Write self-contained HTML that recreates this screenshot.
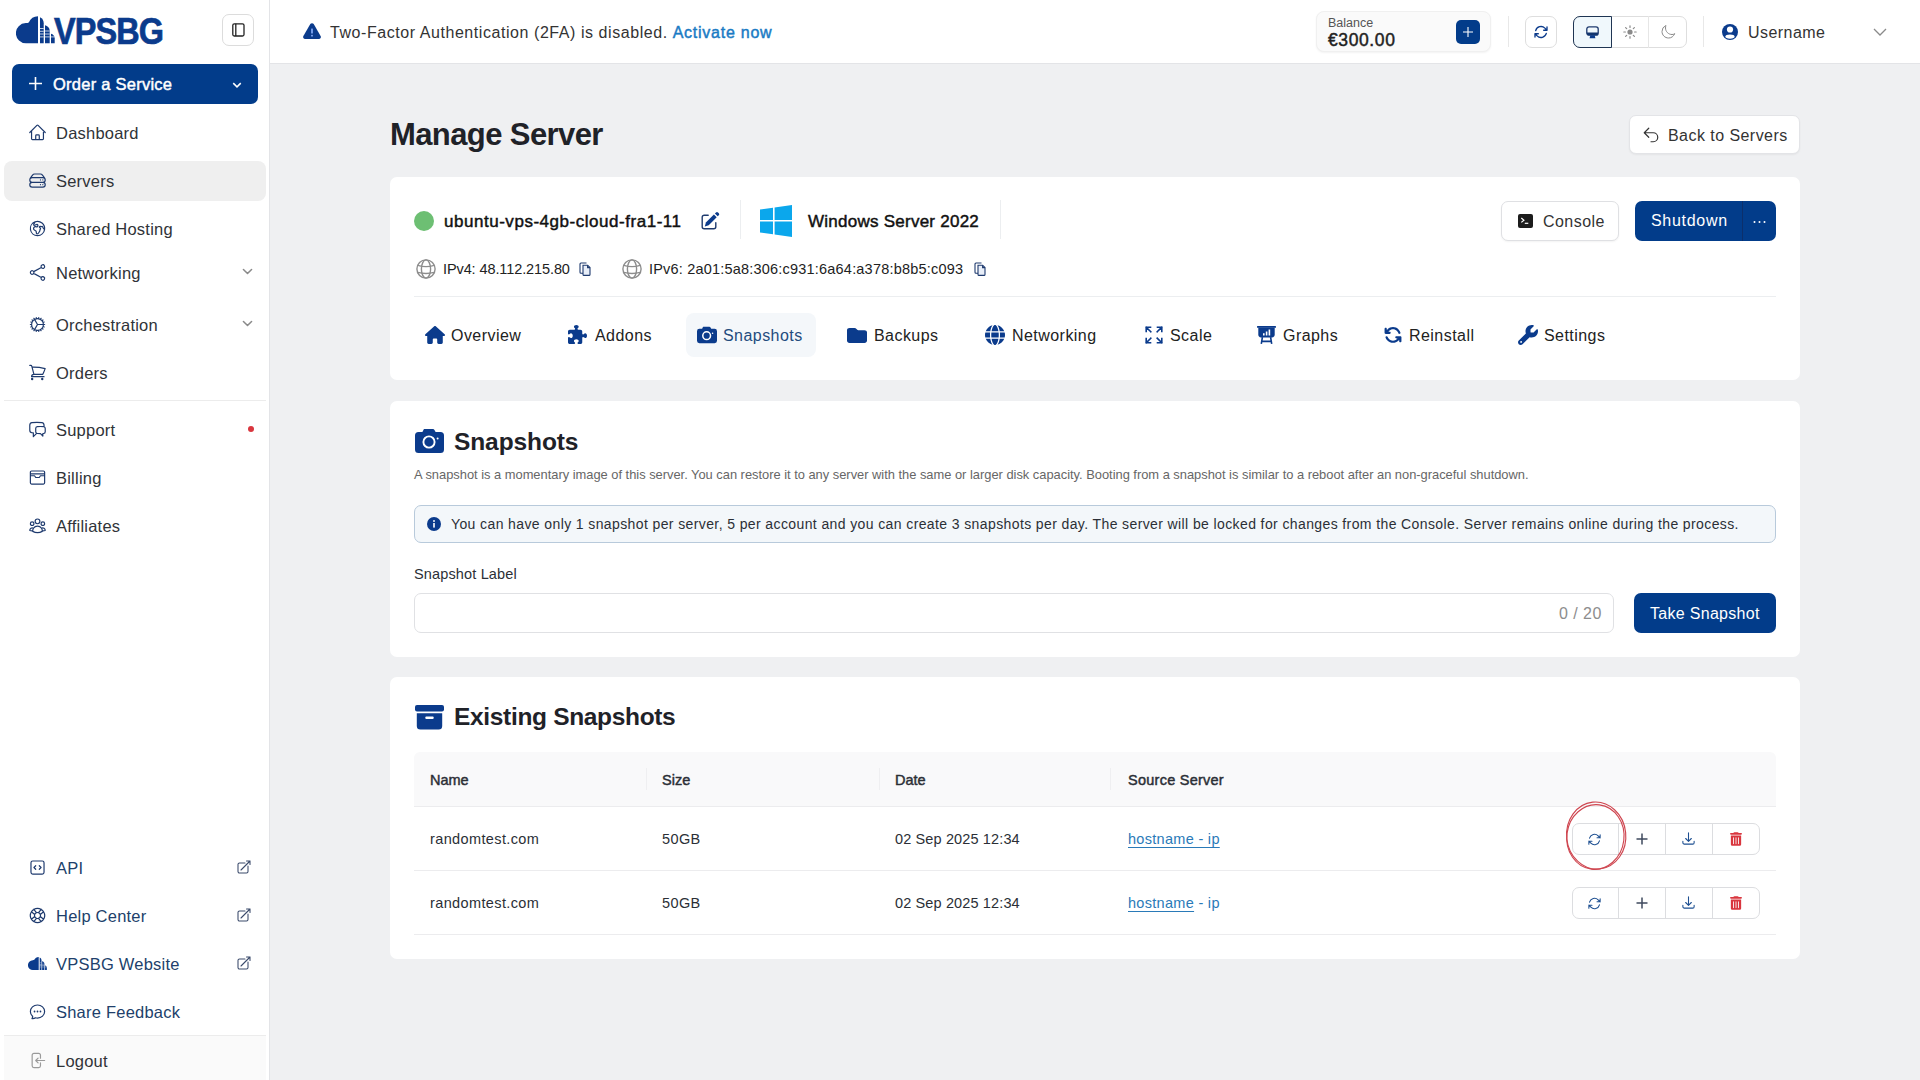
<!DOCTYPE html>
<html><head><meta charset="utf-8">
<style>
*{box-sizing:border-box;margin:0;padding:0}
html,body{width:1920px;height:1080px;overflow:hidden}
body{background:#eff0f2;font-family:"Liberation Sans",sans-serif;color:#1f2937;position:relative}
.abs{position:absolute}
#sidebar{position:absolute;z-index:2;left:0;top:0;width:270px;height:1080px;background:#fff;border-right:1px solid #e3e4e7}
#topbar{position:absolute;left:269px;top:0;width:1651px;height:64px;background:#fff;border-bottom:1px solid #e3e4e7}
.nav{position:absolute;z-index:1;left:4px;width:262px;height:40px;border-radius:8px;font-size:16.5px;letter-spacing:.22px;color:#303338}
.nav .ic{position:absolute;left:24px;top:10px;width:19px;height:19px;color:#1e3a6e}
.nav .tx{position:absolute;left:52px;top:11px;line-height:18px}
.nav .chev{position:absolute;left:237px;top:12px;width:13px;height:13px;color:#8a8a8a}
.nav .chev svg{width:100%;height:100%;display:block}
.nav.blue{color:#213f6b}
.card{position:absolute;left:390px;width:1410px;background:#fff;border-radius:7px}
.t16{font-size:16px;letter-spacing:.45px}
.nav .ic svg{width:100%;height:100%;display:block}
.sb{font-weight:normal!important;-webkit-text-stroke:.45px currentColor}
</style></head>
<body>
<div id="sidebar">
<div class="abs" style="left:16px;top:16px;width:39px;height:27.5px"><svg viewBox="0 0 39 27.5" fill="#0b3b8c"><path d="M22 0.2V27.3H10.2A10.1 10.1 0 0 1 9.8 7.1C11 7.1 12.2 6.9 12.9 6.3A10 10 0 0 1 22 0.2Z"/><path d="M24 1.3C26.3 2.2 27.7 4.5 27.7 7.3V27.3H24Z"/><path d="M29 9.3C31.7 9.9 33.7 12 33.7 14.7V27.3H29Z"/><path d="M35 17.7C37.2 18.2 38.7 20 38.7 22.3V27.3H35Z"/><g fill="#fff" opacity=".75"><rect x="24" y="12" width="3.7" height="1"/><rect x="24" y="14.8" width="3.7" height="1"/><rect x="24" y="17.5" width="3.7" height="1"/><rect x="24" y="20.4" width="3.7" height="1"/><rect x="29" y="14.5" width="4.7" height="1"/><rect x="29" y="17.5" width="4.7" height="1"/><rect x="29" y="20.4" width="4.7" height="1"/><rect x="35" y="20.4" width="3.7" height="1"/></g></svg></div><div class="abs" style="left:54px;top:10.5px;font-size:36px;font-weight:bold;color:#0b3b8c;letter-spacing:-1px;transform-origin:0 0;transform:scaleX(.9);line-height:42px;-webkit-text-stroke:.7px #0b3b8c">VPSBG</div><div class="abs" style="left:222px;top:14px;width:32px;height:32px;border:1px solid #dcdcdc;border-radius:7px"><svg class="abs" style="left:9px;top:8px" width="13" height="14" viewBox="0 0 13 14" fill="none" stroke="#222" stroke-width="1.3"><rect x=".8" y=".8" width="11.2" height="12.2" rx="1.5"/><line x1="3.8" y1=".8" x2="3.8" y2="13"/></svg></div><div class="abs" style="left:12px;top:64px;width:246px;height:40px;background:#023c8a;border-radius:7px;color:#fff"><svg class="abs" style="left:16px;top:12px" width="15" height="15" viewBox="0 0 15 15" stroke="#fff" stroke-width="1.6"><path d="M7.5 1v13M1 7.5h13"/></svg><div class="abs" style="left:41px;top:11px;font-size:16.5px;font-weight:normal;-webkit-text-stroke:.45px #fff;letter-spacing:.25px;line-height:18px">Order a Service</div><svg class="abs" style="left:219px;top:15px" width="12" height="12" viewBox="0 0 24 24" fill="none" stroke="#fff" stroke-width="3"><path d="m19.5 8.25-7.5 7.5-7.5-7.5"/></svg></div><div class="nav" style="top:113px;"><div class="ic"><svg viewBox="0 0 24 24" fill="none" stroke="currentColor" stroke-width="1.5" stroke-linecap="round" stroke-linejoin="round" ><path d="m2.25 12 8.954-8.955c.44-.439 1.152-.439 1.591 0L21.75 12M4.5 9.75v10.125c0 .621.504 1.125 1.125 1.125H9.75v-4.875c0-.621.504-1.125 1.125-1.125h2.25c.621 0 1.125.504 1.125 1.125V21h4.125c.621 0 1.125-.504 1.125-1.125V9.75M8.25 21h8.25"/></svg></div><div class="tx">Dashboard</div></div>
<div class="nav" style="top:161px;background:#efefef;"><div class="ic"><svg viewBox="0 0 24 24" fill="none" stroke="currentColor" stroke-width="1.5" stroke-linecap="round" stroke-linejoin="round"><path d="M5.25 14.25h13.5m-13.5 0a3 3 0 0 1-3-3m3 3a3 3 0 1 0 0 6h13.5a3 3 0 1 0 0-6m-16.5-3a3 3 0 0 1 3-3h13.5a3 3 0 0 1 3 3m-19.5 0a4.5 4.5 0 0 1 .9-2.7L5.737 5.1a3.375 3.375 0 0 1 2.7-1.35h7.126c1.062 0 2.062.5 2.7 1.35l2.587 3.45a4.5 4.5 0 0 1 .9 2.7m0 0a3 3 0 0 1-3 3m0 3h.008v.008h-.008v-.008Zm0-6h.008v.008h-.008v-.008Zm-3 6h.008v.008h-.008v-.008Zm0-6h.008v.008h-.008v-.008Z"/></svg></div><div class="tx">Servers</div></div>
<div class="nav" style="top:209px;"><div class="ic"><svg viewBox="0 0 24 24" fill="none" stroke="currentColor" stroke-width="1.5" stroke-linecap="round" stroke-linejoin="round" ><path d="m20.893 13.393-1.135-1.135a2.252 2.252 0 0 1-.421-.585l-1.08-2.16a.414.414 0 0 0-.663-.107.827.827 0 0 1-.812.21l-1.273-.363a.89.89 0 0 0-.738 1.595l.587.39c.59.395.674 1.23.172 1.732l-.2.2c-.212.212-.33.498-.33.796v.41c0 .409-.11.809-.32 1.158l-1.315 2.191a2.11 2.11 0 0 1-1.81 1.025 1.055 1.055 0 0 1-1.055-1.055v-1.172c0-.92-.56-1.747-1.414-2.089l-.655-.261a2.25 2.25 0 0 1-1.383-2.46l.007-.042a2.25 2.25 0 0 1 .29-.787l.09-.15a2.25 2.25 0 0 1 2.37-1.048l1.178.236a1.125 1.125 0 0 0 1.302-.795l.208-.73a1.125 1.125 0 0 0-.578-1.315l-.665-.332-.091.091a2.25 2.25 0 0 1-1.591.659h-.18c-.249 0-.487.1-.662.274a.931.931 0 0 1-1.458-1.137l1.411-2.353a2.25 2.25 0 0 0 .286-.76m11.928 9.869A9 9 0 0 0 8.965 3.525m11.928 9.868A9 9 0 1 1 8.965 3.525"/></svg></div><div class="tx">Shared Hosting</div></div>
<div class="nav" style="top:253px;"><div class="ic"><svg viewBox="0 0 24 24" fill="none" stroke="currentColor" stroke-width="1.5" stroke-linecap="round" stroke-linejoin="round" ><path d="M7.217 10.907a2.25 2.25 0 1 0 0 2.186m0-2.186c.18.324.283.696.283 1.093s-.103.77-.283 1.093m0-2.186 9.566-5.314m-9.566 7.5 9.566 5.314m0 0a2.25 2.25 0 1 0 3.935 2.186 2.25 2.25 0 0 0-3.935-2.186Zm0-12.814a2.25 2.25 0 1 0 3.933-2.185 2.25 2.25 0 0 0-3.933 2.185Z"/></svg></div><div class="tx">Networking</div><div class="chev"><svg viewBox="0 0 24 24" fill="none" stroke="currentColor" stroke-width="2.8" stroke-linecap="round" stroke-linejoin="round" ><path d="m19.5 8.25-7.5 7.5-7.5-7.5"/></svg></div></div>
<div class="nav" style="top:305px;"><div class="ic"><svg viewBox="0 0 24 24" fill="none" stroke="currentColor" stroke-width="1.5" stroke-linecap="round" stroke-linejoin="round" ><path d="M4.5 12a7.5 7.5 0 0 0 15 0m-15 0a7.5 7.5 0 1 1 15 0m-15 0H3m16.5 0H21m-1.5 0H12m-8.457 3.077 1.41-.513m14.095-5.13 1.41-.513M5.106 17.785l1.15-.964m11.49-9.642 1.149-.964M7.501 19.795l.75-1.3m7.5-12.99.75-1.3m-6.063 16.658.26-1.477m2.605-14.772.26-1.477m0 17.726-.26-1.477M10.698 4.614l-.26-1.477M16.5 19.794l-.75-1.299M7.5 4.205 12 12m6.894 5.785-1.149-.964M6.256 7.178l-1.15-.964m15.352 8.864-1.41-.513M4.954 9.435l-1.41-.514M12.002 12l-3.75 6.495"/></svg></div><div class="tx">Orchestration</div><div class="chev"><svg viewBox="0 0 24 24" fill="none" stroke="currentColor" stroke-width="2.8" stroke-linecap="round" stroke-linejoin="round" ><path d="m19.5 8.25-7.5 7.5-7.5-7.5"/></svg></div></div>
<div class="nav" style="top:353px;"><div class="ic"><svg viewBox="0 0 24 24" fill="none" stroke="currentColor" stroke-width="1.5" stroke-linecap="round" stroke-linejoin="round" ><path d="M2.25 3h1.386c.51 0 .955.343 1.087.835l.383 1.437M7.5 14.25a3 3 0 0 0-3 3h15.75m-12.75-3h11.218c1.121-2.3 2.1-4.684 2.924-7.138a60.114 60.114 0 0 0-16.536-1.84M7.5 14.25 5.106 5.272M6 20.25a.75.75 0 1 1-1.5 0 .75.75 0 0 1 1.5 0Zm12.75 0a.75.75 0 1 1-1.5 0 .75.75 0 0 1 1.5 0Z"/></svg></div><div class="tx">Orders</div></div>
<div class="nav" style="top:410px;"><div class="ic"><svg viewBox="0 0 24 24" fill="none" stroke="currentColor" stroke-width="1.5" stroke-linecap="round" stroke-linejoin="round" ><path d="M20.25 8.511c.884.284 1.5 1.128 1.5 2.097v4.286c0 1.136-.847 2.1-1.98 2.193-.34.027-.68.052-1.02.072v3.091l-3-3c-1.354 0-2.694-.055-4.02-.163a2.115 2.115 0 0 1-.825-.242m9.345-8.334a2.126 2.126 0 0 0-.476-.095 48.64 48.64 0 0 0-8.048 0c-1.131.094-1.976 1.057-1.976 2.192v4.286c0 .837.46 1.58 1.155 1.951m9.345-8.334V6.637c0-1.621-1.152-3.026-2.760-3.235A48.455 48.455 0 0 0 11.25 3c-2.115 0-4.198.137-6.240.402-1.608.209-2.760 1.614-2.760 3.235v6.226c0 1.621 1.152 3.026 2.760 3.235.577.075 1.157.14 1.740.194V21l4.155-4.155"/></svg></div><div class="tx">Support</div><div class="abs" style="left:244px;top:16px;width:6px;height:6px;border-radius:3px;background:#d9363e"></div></div>
<div class="nav" style="top:458px;"><div class="ic"><svg viewBox="0 0 24 24" fill="none" stroke="currentColor" stroke-width="1.5" stroke-linecap="round" stroke-linejoin="round" ><path d="M4.5 3.75h15a1.5 1.5 0 0 1 1.5 1.5v13.5a1.5 1.5 0 0 1-1.5 1.5h-15A1.5 1.5 0 0 1 3 18.75V5.25a1.5 1.5 0 0 1 1.5-1.5ZM3 7.5h18M3 9.75h5.25l1.5 2.25h4.5l1.5-2.25H21"/></svg></div><div class="tx">Billing</div></div>
<div class="nav" style="top:506px;"><div class="ic"><svg viewBox="0 0 24 24" fill="none" stroke="currentColor" stroke-width="1.5" stroke-linecap="round" stroke-linejoin="round" ><path d="M18 18.72a9.094 9.094 0 0 0 3.741-.479 3 3 0 0 0-4.682-2.72m.94 3.198.001.031c0 .225-.012.447-.037.666A11.944 11.944 0 0 1 12 21c-2.17 0-4.207-.576-5.963-1.584A6.062 6.062 0 0 1 6 18.719m12 0a5.971 5.971 0 0 0-.941-3.197m0 0A5.995 5.995 0 0 0 12 12.75a5.995 5.995 0 0 0-5.058 2.772m0 0a3 3 0 0 0-4.681 2.72 8.986 8.986 0 0 0 3.74.477m.94-3.197a5.971 5.971 0 0 0-.94 3.197M15 6.75a3 3 0 1 1-6 0 3 3 0 0 1 6 0Zm6 3a2.25 2.25 0 1 1-4.5 0 2.25 2.25 0 0 1 4.5 0Zm-13.5 0a2.25 2.25 0 1 1-4.5 0 2.250 2.250 0 0 1 4.5 0Z"/></svg></div><div class="tx">Affiliates</div></div>
<div class="nav blue" style="top:848px;"><div class="ic"><svg viewBox="0 0 24 24" fill="none" stroke="currentColor" stroke-width="1.5" stroke-linecap="round" stroke-linejoin="round" ><path d="M14.25 9.75 16.5 12l-2.25 2.25m-4.5 0L7.5 12l2.25-2.25M6 20.25h12A2.25 2.25 0 0 0 20.25 18V6A2.25 2.25 0 0 0 18 3.75H6A2.25 2.25 0 0 0 3.75 6v12A2.25 2.25 0 0 0 6 20.25Z"/></svg></div><div class="tx">API</div><div class="abs" style="left:232px;top:11px;width:16px;height:16px;color:#3a4a6b"><svg viewBox="0 0 24 24" fill="none" stroke="currentColor" stroke-width="1.6" stroke-linecap="round" stroke-linejoin="round" ><path d="M13.5 6H5.25A2.25 2.25 0 0 0 3 8.25v10.5A2.25 2.25 0 0 0 5.25 21h10.5A2.25 2.25 0 0 0 18 18.75V10.5m-10.5 6L21 3m0 0h-5.25M21 3v5.25"/></svg></div></div>
<div class="nav blue" style="top:896px;"><div class="ic"><svg viewBox="0 0 24 24" fill="none" stroke="currentColor" stroke-width="1.5" stroke-linecap="round" stroke-linejoin="round" ><path d="M16.712 4.33a9.027 9.027 0 0 1 1.652 1.306c.51.51.944 1.064 1.306 1.652M16.712 4.33l-3.448 4.138m3.448-4.138a9.014 9.014 0 0 0-9.424 0M19.67 7.288l-4.138 3.448m4.138-3.448a9.014 9.014 0 0 1 0 9.424m-4.138-5.976a3.736 3.736 0 0 0-.88-1.388 3.737 3.737 0 0 0-1.388-.88m2.268 2.268a3.765 3.765 0 0 1 0 2.528m-2.268-4.796a3.765 3.765 0 0 0-2.528 0m4.796 4.796c-.181.506-.475.982-.88 1.388a3.736 3.736 0 0 1-1.388.88m2.268-2.268 4.138 3.448m0 0a9.027 9.027 0 0 1-1.306 1.652c-.51.51-1.064.944-1.652 1.306m0 0-3.448-4.138m3.448 4.138a9.014 9.014 0 0 1-9.424 0m5.976-4.138a3.765 3.765 0 0 1-2.528 0m0 0a3.736 3.736 0 0 1-1.388-.88 3.737 3.737 0 0 1-.88-1.388m2.268 2.268L7.288 19.67m0 0a9.024 9.024 0 0 1-1.652-1.306 9.027 9.027 0 0 1-1.306-1.652m0 0 4.138-3.448M4.33 16.712a9.014 9.014 0 0 1 0-9.424m4.138 5.976a3.765 3.765 0 0 1 0-2.528m0 0c.181-.506.475-.982.88-1.388a3.736 3.736 0 0 1 1.388-.88m-2.268 2.268L4.33 7.288m6.406 1.18L7.288 4.33m0 0a9.024 9.024 0 0 0-1.652 1.306A9.025 9.025 0 0 0 4.33 7.288"/></svg></div><div class="tx">Help Center</div><div class="abs" style="left:232px;top:11px;width:16px;height:16px;color:#3a4a6b"><svg viewBox="0 0 24 24" fill="none" stroke="currentColor" stroke-width="1.6" stroke-linecap="round" stroke-linejoin="round" ><path d="M13.5 6H5.25A2.25 2.25 0 0 0 3 8.25v10.5A2.25 2.25 0 0 0 5.25 21h10.5A2.25 2.25 0 0 0 18 18.75V10.5m-10.5 6L21 3m0 0h-5.25M21 3v5.25"/></svg></div></div>
<div class="nav blue" style="top:944px;"><div class="ic"><svg viewBox="0 0 39 27.5" fill="#0b3b8c"><path d="M22 0.2V27.3H10.2A10.1 10.1 0 0 1 9.8 7.1C11 7.1 12.2 6.9 12.9 6.3A10 10 0 0 1 22 0.2Z"/><path d="M24 1.3C26.3 2.2 27.7 4.5 27.7 7.3V27.3H24Z"/><path d="M29 9.3C31.7 9.9 33.7 12 33.7 14.7V27.3H29Z"/><path d="M35 17.7C37.2 18.2 38.7 20 38.7 22.3V27.3H35Z"/><g fill="#fff" opacity=".75"><rect x="24" y="12" width="3.7" height="1"/><rect x="24" y="14.8" width="3.7" height="1"/><rect x="24" y="17.5" width="3.7" height="1"/><rect x="24" y="20.4" width="3.7" height="1"/><rect x="29" y="14.5" width="4.7" height="1"/><rect x="29" y="17.5" width="4.7" height="1"/><rect x="29" y="20.4" width="4.7" height="1"/><rect x="35" y="20.4" width="3.7" height="1"/></g></svg></div><div class="tx">VPSBG Website</div><div class="abs" style="left:232px;top:11px;width:16px;height:16px;color:#3a4a6b"><svg viewBox="0 0 24 24" fill="none" stroke="currentColor" stroke-width="1.6" stroke-linecap="round" stroke-linejoin="round" ><path d="M13.5 6H5.25A2.25 2.25 0 0 0 3 8.25v10.5A2.25 2.25 0 0 0 5.25 21h10.5A2.25 2.25 0 0 0 18 18.75V10.5m-10.5 6L21 3m0 0h-5.25M21 3v5.25"/></svg></div></div>
<div class="nav blue" style="top:992px;"><div class="ic"><svg viewBox="0 0 24 24" fill="none" stroke="currentColor" stroke-width="1.5" stroke-linecap="round" stroke-linejoin="round" ><path d="M8.625 12a.375.375 0 1 1-.75 0 .375.375 0 0 1 .75 0Zm0 0H8.25m4.125 0a.375.375 0 1 1-.75 0 .375.375 0 0 1 .75 0Zm0 0H12m4.125 0a.375.375 0 1 1-.75 0 .375.375 0 0 1 .75 0Zm0 0h-.375M21 12c0 4.556-4.03 8.25-9 8.25a9.764 9.764 0 0 1-2.555-.337A5.972 5.972 0 0 1 5.41 20.97a5.969 5.969 0 0 1-.474-.065 4.48 4.48 0 0 0 .978-2.025c.09-.457-.133-.901-.467-1.226C3.93 16.178 3 14.189 3 12c0-4.556 4.03-8.25 9-8.25s9 3.694 9 8.25Z"/></svg></div><div class="tx">Share Feedback</div></div>
<div class="nav" style="top:1041px;"><div class="ic" style="color:#9a9a9a"><svg viewBox="0 0 24 24" fill="none" stroke="currentColor" stroke-width="1.5" stroke-linecap="round" stroke-linejoin="round" ><path d="M15.75 9V5.25A2.25 2.25 0 0 0 13.5 3h-6a2.25 2.25 0 0 0-2.25 2.25v13.5A2.25 2.25 0 0 0 7.5 21h6a2.25 2.25 0 0 0 2.25-2.25V15m-3 0-3-3m0 0 3-3m-3 3H21"/></svg></div><div class="tx">Logout</div></div>
<div class="abs" style="left:4px;top:400px;width:262px;height:1px;background:#ececec"></div><div class="abs" style="left:4px;top:1035px;width:262px;height:45px;background:#fafafa;border-top:1px solid #ececec"></div>
</div>
<div id="topbar">
<svg class="abs" style="left:34px;top:23px" width="18" height="16" viewBox="0 0 18 16"><path d="M7.3 1.1a2 2 0 0 1 3.4 0l6.9 11.9A2 2 0 0 1 15.9 16H2.1A2 2 0 0 1 .4 13L7.3 1.1Z" fill="#0b3b8c"/><rect x="8.2" y="5.5" width="1.6" height="5" rx=".5" fill="#8fb4ff"/><rect x="8.2" y="11.8" width="1.6" height="1.6" rx=".5" fill="#8fb4ff"/></svg><div class="abs t16" style="left:61px;top:23px;line-height:20px;color:#333;white-space:nowrap;letter-spacing:.56px">Two-Factor Authentication (2FA) is disabled. <span style="color:#1a7bc4;-webkit-text-stroke:.45px #1a7bc4;letter-spacing:.75px">Activate now</span></div><div class="abs" style="left:1047px;top:11px;width:175px;height:41px;background:#fafafa;border:1px solid #f0f0f0;border-radius:8px;box-shadow:0 1px 2px rgba(0,0,0,.05)"><div class="abs" style="left:11px;top:4px;font-size:12.5px;color:#555;line-height:14px">Balance</div><div class="abs sb" style="left:11px;top:19px;font-size:17.5px;color:#222;line-height:18px;letter-spacing:.6px">€300.00</div><div class="abs" style="left:139px;top:8px;width:24px;height:24px;background:#023c8a;border-radius:5px"><svg class="abs" style="left:6px;top:6px" width="12" height="12" viewBox="0 0 12 12" stroke="#fff" stroke-width="1.1"><path d="M6 1v10M1 6h10"/></svg></div></div><div class="abs" style="left:1239px;top:16px;width:1px;height:31px;background:#e8e8e8"></div><div class="abs" style="left:1256px;top:16px;width:32px;height:32px;border:1px solid #dedede;border-radius:7px"><svg class="abs" style="left:7px;top:7px" width="16" height="16" viewBox="0 0 24 24" fill="none" stroke="#0b3b8c" stroke-width="2" stroke-linecap="round" stroke-linejoin="round"><path d="M16.023 9.348h4.992v-.001M2.985 19.644v-4.992m0 0h4.992m-4.993 0 3.181 3.183a8.25 8.25 0 0 0 13.803-3.7M4.031 9.865a8.25 8.25 0 0 1 13.803-3.7l3.181 3.182m0-4.991v4.99"/></svg></div><div class="abs" style="left:1304px;top:16px;width:114px;height:32px;border:1px solid #dedede;border-radius:7px"></div><div class="abs" style="left:1304px;top:16px;width:39px;height:32px;border:1.5px solid #1f3553;border-radius:7px 0 0 7px;background:#f0f8fc"><svg class="abs" style="left:12px;top:9px" width="13" height="13" viewBox="0 0 13 13"><rect x=".8" y=".8" width="11.4" height="8.4" rx="2.2" fill="none" stroke="#1e3a6e" stroke-width="1.3"/><path d="M.8 6.6h11.4v.4a2.2 2.2 0 0 1-2.2 2.2H3A2.2 2.2 0 0 1 .8 7Z" fill="#12356e"/><path d="M3.6 12.2h5.8l-.7-3H4.3Z" fill="#0b3b8c"/></svg></div><div class="abs" style="left:1379px;top:16px;width:1px;height:32px;background:#e6e6e6"></div><svg class="abs" style="left:1354px;top:25px" width="14" height="14" viewBox="0 0 14 14" stroke="#8a8a8a" stroke-width="1.2" stroke-linecap="round"><circle cx="7" cy="7" r="2.6" fill="#8a8a8a" stroke="none"/><path d="M7 .8v1.6M7 11.6v1.6M.8 7h1.6M11.6 7h1.6M2.6 2.6l1.1 1.1M10.3 10.3l1.1 1.1M2.6 11.4l1.1-1.1M10.3 3.7l1.1-1.1"/></svg><svg class="abs" style="left:1391px;top:24px" width="16" height="16" viewBox="0 0 24 24" fill="none" stroke="#8a8a8a" stroke-width="1.5" stroke-linecap="round" stroke-linejoin="round"><path d="M21.752 15.002A9.72 9.72 0 0 1 18 15.75c-5.385 0-9.75-4.365-9.75-9.75 0-1.33.266-2.597.748-3.752A9.753 9.753 0 0 0 3 11.25C3 16.635 7.365 21 12.75 21a9.753 9.753 0 0 0 9.002-5.998Z"/></svg><div class="abs" style="left:1434px;top:16px;width:1px;height:31px;background:#e8e8e8"></div><svg class="abs" style="left:1453px;top:24px" width="16" height="16" viewBox="0 0 16 16"><circle cx="8" cy="8" r="8" fill="#0b3b8c"/><circle cx="8" cy="5.5" r="3.1" fill="#fff"/><ellipse cx="8" cy="12.6" rx="4.6" ry="2.1" fill="#fff"/></svg><div class="abs t16" style="left:1479px;top:23px;line-height:20px;color:#333">Username</div><svg class="abs" style="left:1604px;top:27px" width="14" height="10" viewBox="0 0 14 10" fill="none" stroke="#8a8a8a" stroke-width="1.3"><path d="M1 2l6 6 6-6"/></svg>
</div>
<div id="main">
<div class="abs" style="left:390px;top:116px;font-size:31px;font-weight:bold;color:#1f2228;line-height:38px;letter-spacing:-.6px">Manage Server</div><div class="abs" style="left:1629px;top:115px;width:171px;height:39px;background:#fff;border:1px solid #e3e4e7;border-radius:7px;box-shadow:0 1px 2px rgba(0,0,0,.05)"><svg class="abs" style="left:12px;top:10px" width="18" height="18" viewBox="0 0 24 24" fill="none" stroke="#333" stroke-width="1.6" stroke-linecap="round" stroke-linejoin="round"><path d="M9 15 3 9m0 0 6-6M3 9h12a6 6 0 0 1 0 12h-3"/></svg><div class="abs t16" style="left:38px;top:10px;line-height:20px;color:#333">Back to Servers</div></div><div class="card" style="top:177px;height:203px"></div><div class="abs" style="left:414px;top:211px;width:20px;height:20px;border-radius:10px;background:#6dbf73"></div><div class="abs sb" style="left:444px;top:212px;font-size:17px;color:#111;line-height:20px;letter-spacing:.53px">ubuntu-vps-4gb-cloud-fra1-11</div><svg class="abs" style="left:701px;top:211px" width="19" height="19" viewBox="0 0 19 19"><path d="M7.2 4.2H3.2A2 2 0 0 0 1.2 6.2V15.8A2 2 0 0 0 3.2 17.8H12.8A2 2 0 0 0 14.8 15.8V11.8" fill="none" stroke="#1e3a6e" stroke-width="1.4" stroke-linecap="round"/><path d="M3.8 15.4 4.9 11.5 12.9 3.5 15.7 6.3 7.7 14.3Z" fill="#0b3b8c"/><path d="M13.9 2.5 15 1.4a1.4 1.4 0 0 1 2 0l.8.8a1.4 1.4 0 0 1 0 2L16.7 5.3Z" fill="#0b3b8c"/></svg><div class="abs" style="left:740px;top:200px;width:1px;height:39px;background:#eceef0"></div><svg class="abs" style="left:760px;top:205px" width="32" height="32" viewBox="0 0 32 32" fill="#0ba7ec"><path d="M0 4.5 13 2.7V15H0Z"/><path d="M14.6 2.5 32 0V15H14.6Z"/><path d="M0 16.6h13v12.7L0 27.5Z"/><path d="M14.6 16.6H32V32l-17.4-2.5Z"/></svg><div class="abs sb" style="left:808px;top:212px;font-size:17px;color:#111;line-height:20px;letter-spacing:.25px">Windows Server 2022</div><div class="abs" style="left:1000px;top:200px;width:1px;height:39px;background:#eceef0"></div><div class="abs" style="left:1501px;top:201px;width:118px;height:40px;border:1px solid #dfe0e3;border-radius:7px;background:#fff;box-shadow:0 1px 2px rgba(0,0,0,.05)"><svg class="abs" style="left:16px;top:12px" width="15" height="14" viewBox="0 0 15 14"><rect width="15" height="14" rx="2" fill="#1c1c1c"/><path d="M3.3 4l2.6 2.2-2.6 2.2" fill="none" stroke="#fff" stroke-width="1.2"/><path d="M6.8 9.3h3.5" stroke="#fff" stroke-width="1.2"/></svg><div class="abs t16" style="left:41px;top:10px;line-height:20px;color:#333">Console</div></div><div class="abs" style="left:1635px;top:201px;width:141px;height:40px;border-radius:7px;background:#023c8a"><div class="abs t16" style="left:16px;top:10px;line-height:20px;color:#fff;letter-spacing:.7px">Shutdown</div><div class="abs" style="left:107px;top:0;width:1px;height:40px;background:#0c2f6b"></div><svg class="abs" style="left:118px;top:19px" width="13" height="4" viewBox="0 0 13 4" fill="#fff"><circle cx="1.5" cy="2" r="1"/><circle cx="6.5" cy="2" r="1"/><circle cx="11.5" cy="2" r="1"/></svg></div><div class="abs" style="left:416px;top:259px"><svg width="20" height="20" viewBox="0 0 20 20" fill="none" stroke="#8d8d8d" stroke-width="1.4"><circle cx="10" cy="10" r="9.1"/><ellipse cx="10" cy="10" rx="4.6" ry="9.1"/><path d="M1.8 6.3Q10 9 18.2 6.3M1.8 13.4Q10 15.6 18.2 13.4"/></svg></div><div class="abs" style="left:443px;top:260px;font-size:14.5px;color:#222;line-height:18px;letter-spacing:-.1px">IPv4: 48.112.215.80</div><div class="abs" style="left:579px;top:262px"><svg width="12" height="14" viewBox="0 0 12 14" fill="none" stroke="#1e3a6e" stroke-width="1.1"><path d="M4 3.2h4.6L11 5.6v6.8a1 1 0 0 1-1 1H5a1 1 0 0 1-1-1Z" fill="#e8eef8"/><path d="M8.6 3.2v2.4H11"/><path d="M7.5 1H2a1 1 0 0 0-1 1v8.2a1 1 0 0 0 1 1h2"/></svg></div><div class="abs" style="left:622px;top:259px"><svg width="20" height="20" viewBox="0 0 20 20" fill="none" stroke="#8d8d8d" stroke-width="1.4"><circle cx="10" cy="10" r="9.1"/><ellipse cx="10" cy="10" rx="4.6" ry="9.1"/><path d="M1.8 6.3Q10 9 18.2 6.3M1.8 13.4Q10 15.6 18.2 13.4"/></svg></div><div class="abs" style="left:649px;top:260px;font-size:14.5px;color:#222;line-height:18px;letter-spacing:.2px">IPv6: 2a01:5a8:306:c931:6a64:a378:b8b5:c093</div><div class="abs" style="left:974px;top:262px"><svg width="12" height="14" viewBox="0 0 12 14" fill="none" stroke="#1e3a6e" stroke-width="1.1"><path d="M4 3.2h4.6L11 5.6v6.8a1 1 0 0 1-1 1H5a1 1 0 0 1-1-1Z" fill="#e8eef8"/><path d="M8.6 3.2v2.4H11"/><path d="M7.5 1H2a1 1 0 0 0-1 1v8.2a1 1 0 0 0 1 1h2"/></svg></div><div class="abs" style="left:414px;top:296px;width:1362px;height:1px;background:#eceef0"></div><div class="abs" style="left:686px;top:313px;width:130px;height:44px;border-radius:8px;background:#f4f7fa"></div><div class="abs" style="left:425px;top:326px;width:20px;height:18px"><svg width="20" height="18" viewBox="0 0 576 512" preserveAspectRatio="none"><path fill="#0b3b8c" d="M575.8 255.5c0 18-15 32.1-32 32.1h-32l.7 160.2c0 2.7-.2 5.4-.5 8.1V472c0 22.1-17.9 40-40 40H456c-1.1 0-2.2 0-3.3-.1c-1.4 .1-2.800 .1-4.200 .1H416 392c-22.1 0-40-17.9-40-40V448 384c0-17.7-14.3-32-32-32H256c-17.7 0-32 14.3-32 32v64 24c0 22.1-17.9 40-40 40H160 128.100c-1.5 0-3-.1-4.500-.2c-1.2 .1-2.400 .2-3.600 .2H104c-22.1 0-40-17.9-40-40V360c0-.9 0-1.900 .1-2.800V287.600H32c-18 0-32-14-32-32.100c0-9 3-17 10-24L266.400 8c7-7 15-8 22-8s15 2 21 7L564.800 231.500c8 7 12 15 11 24z"/></svg></div><div class="abs t16" style="left:451px;top:326px;line-height:20px;color:#222">Overview</div><div class="abs" style="left:568px;top:325px;width:19px;height:19px"><svg width="19" height="19" viewBox="0 0 512 512" preserveAspectRatio="none"><path fill="#0b3b8c" d="M192 104.800c0-9.200-5.800-17.300-13.200-22.800C167.200 73.300 160 61.300 160 48c0-26.500 28.700-48 64-48s64 21.500 64 48c0 13.300-7.200 25.300-18.800 34c-7.400 5.500-13.200 13.600-13.200 22.800c0 12.800 10.400 23.200 23.200 23.200H336c26.500 0 48 21.500 48 48v56.800c0 12.800 10.400 23.200 23.200 23.200c9.200 0 17.300-5.800 22.800-13.200c8.700-11.600 20.700-18.800 34-18.800c26.500 0 48 28.700 48 64s-21.500 64-48 64c-13.300 0-25.300-7.200-34-18.800c-5.500-7.400-13.600-13.200-22.800-13.200c-12.800 0-23.200 10.400-23.200 23.200V464c0 26.500-21.500 48-48 48H279.200c-12.800 0-23.200-10.400-23.200-23.200c0-9.200 5.800-17.300 13.200-22.800c11.600-8.700 18.800-20.700 18.800-34c0-26.500-28.700-48-64-48s-64 21.500-64 48c0 13.300 7.200 25.300 18.800 34c7.400 5.500 13.200 13.600 13.200 22.800c0 12.800-10.400 23.200-23.200 23.200H48c-26.500 0-48-21.500-48-48V343.200C0 330.400 10.400 320 23.200 320c9.200 0 17.300 5.800 22.800 13.200C54.700 344.800 66.700 352 80 352c26.500 0 48-28.700 48-64s-21.500-64-48-64c-13.300 0-25.300 7.200-34 18.800C40.500 250.200 32.400 256 23.200 256C10.400 256 0 245.600 0 232.800V176c0-26.500 21.500-48 48-48H168.800c12.800 0 23.200-10.400 23.200-23.200z"/></svg></div><div class="abs t16" style="left:595px;top:326px;line-height:20px;color:#222">Addons</div><div class="abs" style="left:697px;top:326px;width:20px;height:18px"><svg width="20" height="18" viewBox="0 0 29 24"><path fill="#0b3b8c" d="M9.2 0h8.6a2 2 0 0 1 1.8 1.2L20.6 3H25.5A3.5 3.5 0 0 1 29 6.5v14A3.5 3.5 0 0 1 25.5 24h-22A3.5 3.5 0 0 1 0 20.5v-14A3.5 3.5 0 0 1 3.5 3h3.9l.9-1.8A2 2 0 0 1 9.2 0Z"/><circle cx="14" cy="13" r="5.6" fill="none" stroke="#fff" stroke-width="2.2"/><circle cx="22.6" cy="9.5" r="1.1" fill="#fff"/></svg></div><div class="abs t16" style="left:723px;top:326px;line-height:20px;color:#234b7e">Snapshots</div><div class="abs" style="left:847px;top:327px;width:20px;height:17px"><svg width="20" height="17" viewBox="0 0 512 512" preserveAspectRatio="none"><path fill="#0b3b8c" d="M64 480H448c35.300 0 64-28.700 64-64V160c0-35.300-28.700-64-64-64H288c-10.100 0-19.600-4.700-25.600-12.800L243.200 57.600C231.100 41.500 212.100 32 192 32H64C28.700 32 0 60.700 0 96V416c0 35.300 28.700 64 64 64z"/></svg></div><div class="abs t16" style="left:874px;top:326px;line-height:20px;color:#222">Backups</div><div class="abs" style="left:985px;top:325px;width:20px;height:20px"><svg width="20" height="20" viewBox="0 0 512 512" preserveAspectRatio="none"><path fill="#0b3b8c" d="M352 256c0 22.200-1.200 43.600-3.300 64H163.300c-2.200-20.400-3.300-41.800-3.300-64s1.200-43.600 3.300-64H348.700c2.200 20.400 3.300 41.800 3.300 64zm28.800-64H503.900c5.300 20.500 8.100 41.900 8.100 64s-2.800 43.500-8.100 64H380.800c2.100-20.600 3.200-42 3.200-64s-1.100-43.400-3.200-64zm112.600-32H376.700c-10-63.900-29.800-117.400-55.300-151.600c78.300 20.700 142 77.500 171.900 151.600zm-149.100 0H167.700c6.100-36.400 15.500-68.600 27-94.700c10.500-23.600 22.200-40.700 33.500-51.500C239.400 3.200 248.700 0 256 0s16.600 3.200 27.800 13.800c11.300 10.800 23 27.900 33.500 51.500c11.600 26 20.900 58.200 27 94.700zm-209 0H18.600C48.600 85.900 112.200 29.100 190.600 8.400C165.100 42.600 145.300 96.100 135.300 160zM8.100 192H131.200c-2.100 20.600-3.200 42-3.200 64s1.100 43.400 3.200 64H8.100C2.800 299.500 0 278.100 0 256s2.800-43.500 8.100-64zM194.700 446.600c-11.600-26-20.900-58.200-27-94.600H344.300c-6.100 36.400-15.500 68.600-27 94.600c-10.500 23.600-22.200 40.700-33.500 51.500C272.600 508.800 263.300 512 256 512s-16.600-3.200-27.800-13.800c-11.300-10.800-23-27.900-33.500-51.500zM135.300 352c10 63.900 29.800 117.400 55.300 151.600C112.200 482.900 48.600 426.100 18.600 352H135.300zm358.100 0c-30 74.100-93.600 130.900-171.900 151.600c25.500-34.200 45.200-87.700 55.300-151.600H493.400z"/></svg></div><div class="abs t16" style="left:1012px;top:326px;line-height:20px;color:#222">Networking</div><div class="abs" style="left:1145px;top:326px;width:18px;height:18px"><svg width="18" height="18" viewBox="0 0 18 18" fill="none" stroke="#0b3b8c" stroke-width="1.6" stroke-linecap="square"><path d="M1.2 5.5V1.2h4.3M1.2 1.2l4.6 4.6M12.5 1.2h4.3v4.3M16.8 1.2l-4.6 4.6M1.2 12.5v4.3h4.3M1.2 16.8l4.6-4.6M16.8 12.5v4.3h-4.3M16.8 16.8l-4.6-4.6"/></svg></div><div class="abs t16" style="left:1170px;top:326px;line-height:20px;color:#222">Scale</div><div class="abs" style="left:1257px;top:326px;width:19px;height:18px"><svg width="19" height="18" viewBox="0 0 19 18"><rect x="0" y="0" width="19" height="1.8" rx=".6" fill="#0b3b8c"/><path fill="#0b3b8c" d="M1.3 1.5H17.7V8.6A2.8 2.8 0 0 1 14.9 11.4H4.1A2.8 2.8 0 0 1 1.3 8.6Z"/><path fill="#fff" d="M6 7.2h1.6v2.4H6ZM8.8 5.6h1.6v4H8.8ZM11.6 3.5h1.6v6.1h-1.6Z"/><path d="M5.4 11.2 4.3 17.8M13.6 11.2l1.1 6.6M4.8 15.4h9.4" stroke="#0b3b8c" stroke-width="1.6" fill="none"/></svg></div><div class="abs t16" style="left:1283px;top:326px;line-height:20px;color:#222">Graphs</div><div class="abs" style="left:1384px;top:326px;width:18px;height:18px"><svg width="18" height="18" viewBox="0 0 512 512" style="transform:scaleX(-1)"><path fill="#0b3b8c" d="M105.100 202.600c7.700-21.800 20.200-42.300 37.800-59.800c62.500-62.500 163.800-62.500 226.300 0L386.300 160H352c-17.700 0-32 14.300-32 32s14.300 32 32 32H463.500c0 0 0 0 0 0h.4c17.700 0 32-14.300 32-32V80c0-17.700-14.300-32-32-32s-32 14.300-32 32v35.200L414.400 97.600c-87.500-87.500-229.300-87.500-316.800 0C73.200 122 55.600 150.700 44.800 181.400c-5.900 16.700 2.900 34.900 19.500 40.800s34.900-2.900 40.800-19.500zM39 289.300c-5 1.500-9.800 4.200-13.700 8.200c-4 4-6.700 8.800-8.100 14c-.3 1.200-.6 2.500-.8 3.800c-.3 1.700-.4 3.400-.4 5.100V432c0 17.700 14.300 32 32 32s32-14.300 32-32V396.900l17.600 17.500 0 0c87.500 87.400 229.300 87.400 316.700 0c24.400-24.400 42.100-53.100 52.900-83.700c5.900-16.700-2.900-34.900-19.500-40.800s-34.900 2.900-40.800 19.500c-7.700 21.800-20.200 42.300-37.800 59.800c-62.500 62.500-163.800 62.500-226.300 0l-.1-.1L125.600 352H160c17.700 0 32-14.300 32-32s-14.300-32-32-32H48.400c-1.600 0-3.200 .1-4.800 .3s-3.100 .5-4.600 1z"/></svg></div><div class="abs t16" style="left:1409px;top:326px;line-height:20px;color:#222">Reinstall</div><div class="abs" style="left:1518px;top:325px;width:20px;height:20px"><svg width="20" height="20" viewBox="0 0 512 512"><path fill="#0b3b8c" d="M352 320c88.400 0 160-71.600 160-160c0-15.300-2.200-30.100-6.200-44.200c-3.100-10.800-16.400-13.200-24.300-5.300l-76.800 76.800c-3 3-7.100 4.700-11.300 4.700H336c-8.800 0-16-7.200-16-16V118.600c0-4.200 1.700-8.300 4.700-11.300l76.800-76.800c7.900-7.900 5.400-21.200-5.300-24.300C382.100 2.200 367.300 0 352 0C263.600 0 192 71.600 192 160c0 19.100 3.400 37.500 9.500 54.500L19.900 396.100C7.200 408.800 0 426.100 0 444.100C0 481.600 30.400 512 67.900 512c18 0 35.300-7.200 48-19.900L297.500 310.500c17 6.200 35.400 9.500 54.500 9.500zM80 408a24 24 0 1 1 0 48 24 24 0 1 1 0-48z"/></svg></div><div class="abs t16" style="left:1544px;top:326px;line-height:20px;color:#222">Settings</div><div class="card" style="top:401px;height:256px"></div><svg class="abs" style="left:415px;top:429px" width="29" height="24" viewBox="0 0 29 24"><path fill="#0b3b8c" d="M9.2 0h8.6a2 2 0 0 1 1.8 1.2L20.6 3H25.5A3.5 3.5 0 0 1 29 6.5v14A3.5 3.5 0 0 1 25.5 24h-22A3.5 3.5 0 0 1 0 20.5v-14A3.5 3.5 0 0 1 3.5 3h3.9l.9-1.8A2 2 0 0 1 9.2 0Z"/><circle cx="14" cy="13" r="5.6" fill="none" stroke="#fff" stroke-width="1.9"/><circle cx="22.6" cy="9.5" r="1" fill="#fff"/></svg><div class="abs" style="left:454px;top:428px;font-size:24.5px;font-weight:bold;color:#1f2228;line-height:28px;letter-spacing:-.1px">Snapshots</div><div class="abs" style="left:414px;top:467px;font-size:12.9px;color:#666;line-height:16px;letter-spacing:-.015px;white-space:nowrap">A snapshot is a momentary image of this server. You can restore it to any server with the same or larger disk capacity. Booting from a snapshot is similar to a reboot after an non-graceful shutdown.</div><div class="abs" style="left:414px;top:505px;width:1362px;height:38px;border:1px solid #b8cadb;border-radius:7px;background:#f3f7fa"></div><svg class="abs" style="left:427px;top:517px" width="14" height="14" viewBox="0 0 14 14"><circle cx="7" cy="7" r="7" fill="#0b3b8c"/><rect x="6.2" y="6" width="1.6" height="4.6" fill="#fff"/><circle cx="7" cy="4" r=".95" fill="#fff"/></svg><div class="abs" style="left:451px;top:515px;font-size:14px;color:#2b2f36;line-height:18px;letter-spacing:.39px;white-space:nowrap">You can have only 1 snapshot per server, 5 per account and you can create 3 snapshots per day. The server will be locked for changes from the Console. Server remains online during the process.</div><div class="abs" style="left:414px;top:565px;font-size:14.5px;color:#2b2f36;line-height:18px;letter-spacing:.15px">Snapshot Label</div><div class="abs" style="left:414px;top:593px;width:1200px;height:40px;border:1px solid #e0e1e4;border-radius:7px;background:#fff"></div><div class="abs t16" style="left:1559px;top:604px;line-height:20px;color:#8d8d8d">0 / 20</div><div class="abs" style="left:1634px;top:593px;width:142px;height:40px;border-radius:7px;background:#023c8a"></div><div class="abs t16" style="left:1650px;top:604px;line-height:20px;color:#fff;letter-spacing:.3px">Take Snapshot</div><div class="card" style="top:677px;height:282px"></div><svg class="abs" style="left:415px;top:705px" width="29" height="25" viewBox="0 0 29 25"><rect x="0" y="0" width="29" height="6.5" rx="2" fill="#0b3b8c"/><path fill="#0b3b8c" d="M1.8 8.3h25.4V21a3.6 3.6 0 0 1-3.6 3.6H5.4A3.6 3.6 0 0 1 1.8 21Z"/><rect x="10.3" y="11.6" width="8.4" height="2.3" rx="1" fill="#fff"/></svg><div class="abs" style="left:454px;top:703px;font-size:24.5px;font-weight:bold;color:#1f2228;line-height:28px;letter-spacing:-.33px">Existing Snapshots</div><div class="abs" style="left:414px;top:752px;width:1362px;height:55px;background:#f9f9fa;border-bottom:1px solid #ececee;border-radius:6px 6px 0 0"></div><div class="abs" style="left:646px;top:768px;width:1px;height:22px;background:#efeff1"></div><div class="abs" style="left:879px;top:768px;width:1px;height:22px;background:#efeff1"></div><div class="abs" style="left:1110px;top:768px;width:1px;height:22px;background:#efeff1"></div><div class="abs sb" style="left:430px;top:771px;font-size:14.5px;color:#2b2f36;line-height:18px;letter-spacing:-.05px">Name</div><div class="abs sb" style="left:662px;top:771px;font-size:14.5px;color:#2b2f36;line-height:18px;letter-spacing:0px">Size</div><div class="abs sb" style="left:895px;top:771px;font-size:14.5px;color:#2b2f36;line-height:18px;letter-spacing:0px">Date</div><div class="abs sb" style="left:1128px;top:771px;font-size:14.5px;color:#2b2f36;line-height:18px;letter-spacing:.25px">Source Server</div><div class="abs" style="left:414px;top:870px;width:1362px;height:1px;background:#ececee"></div><div class="abs" style="left:430px;top:830px;font-size:14.5px;color:#2b2f36;line-height:18px;letter-spacing:.38px">randomtest.com</div><div class="abs" style="left:662px;top:830px;font-size:14.5px;color:#2b2f36;line-height:18px;letter-spacing:.38px">50GB</div><div class="abs" style="left:895px;top:830px;font-size:14.5px;color:#2b2f36;line-height:18px;letter-spacing:.13px">02 Sep 2025 12:34</div><div class="abs" style="left:1128px;top:830px;font-size:14.5px;color:#2a7ab8;line-height:18px;letter-spacing:.3px;text-decoration:underline;text-underline-offset:3px">hostname - ip</div><div class="abs" style="left:1572px;top:823px;width:188px;height:32px;border:1px solid #dcdde0;border-radius:7px;background:#fff"></div><div class="abs" style="left:1618px;top:823px;width:1px;height:32px;background:#dcdde0"></div><div class="abs" style="left:1665px;top:823px;width:1px;height:32px;background:#dcdde0"></div><div class="abs" style="left:1712px;top:823px;width:1px;height:32px;background:#dcdde0"></div><svg class="abs" style="left:1587px;top:832px" width="15" height="15" viewBox="0 0 24 24" fill="none" stroke="#1d4f91" stroke-width="1.7" stroke-linecap="round" stroke-linejoin="round"><path d="M16.023 9.348h4.992v-.001M2.985 19.644v-4.992m0 0h4.992m-4.993 0 3.181 3.183a8.25 8.25 0 0 0 13.803-3.7M4.031 9.865a8.25 8.25 0 0 1 13.803-3.7l3.181 3.182m0-4.991v4.99"/></svg><svg class="abs" style="left:1636px;top:833px" width="12" height="12" viewBox="0 0 12 12" stroke="#3f4a5e" stroke-width="1.5"><path d="M6 .5v11M.5 6h11"/></svg><svg class="abs" style="left:1681px;top:831px" width="15" height="15" viewBox="0 0 24 24" fill="none" stroke="#1d4f91" stroke-width="1.7" stroke-linecap="round" stroke-linejoin="round"><path d="M3 16.5v2.25A2.25 2.25 0 0 0 5.25 21h13.5A2.25 2.25 0 0 0 21 18.75V16.5M16.5 12 12 16.5m0 0L7.5 12m4.5 4.5V3"/></svg><svg class="abs" style="left:1730px;top:832px" width="12" height="14" viewBox="0 0 448 512"><path fill="#d9363e" d="M135.200 17.700C140.600 6.800 151.700 0 163.800 0H284.200c12.100 0 23.200 6.800 28.600 17.700L320 32h96c17.700 0 32 14.300 32 32s-14.300 32-32 32H32C14.300 96 0 81.700 0 64S14.300 32 32 32h96l7.200-14.300zM32 128H416V448c0 35.300-28.700 64-64 64H96c-35.300 0-64-28.700-64-64V128zm96 64c-8.800 0-16 7.200-16 16V432c0 8.800 7.200 16 16 16s16-7.200 16-16V208c0-8.800-7.200-16-16-16zm96 0c-8.800 0-16 7.200-16 16V432c0 8.800 7.200 16 16 16s16-7.200 16-16V208c0-8.800-7.200-16-16-16zm96 0c-8.800 0-16 7.200-16 16V432c0 8.800 7.200 16 16 16s16-7.200 16-16V208c0-8.800-7.200-16-16-16z"/></svg><div class="abs" style="left:414px;top:934px;width:1362px;height:1px;background:#ececee"></div><div class="abs" style="left:430px;top:894px;font-size:14.5px;color:#2b2f36;line-height:18px;letter-spacing:.38px">randomtest.com</div><div class="abs" style="left:662px;top:894px;font-size:14.5px;color:#2b2f36;line-height:18px;letter-spacing:.38px">50GB</div><div class="abs" style="left:895px;top:894px;font-size:14.5px;color:#2b2f36;line-height:18px;letter-spacing:.13px">02 Sep 2025 12:34</div><div class="abs" style="left:1128px;top:894px;font-size:14.5px;color:#2a7ab8;line-height:18px;letter-spacing:.3px"><span style="text-decoration:underline;text-underline-offset:3px">hostname</span> - ip</div><div class="abs" style="left:1572px;top:887px;width:188px;height:32px;border:1px solid #dcdde0;border-radius:7px;background:#fff"></div><div class="abs" style="left:1618px;top:887px;width:1px;height:32px;background:#dcdde0"></div><div class="abs" style="left:1665px;top:887px;width:1px;height:32px;background:#dcdde0"></div><div class="abs" style="left:1712px;top:887px;width:1px;height:32px;background:#dcdde0"></div><svg class="abs" style="left:1587px;top:896px" width="15" height="15" viewBox="0 0 24 24" fill="none" stroke="#1d4f91" stroke-width="1.7" stroke-linecap="round" stroke-linejoin="round"><path d="M16.023 9.348h4.992v-.001M2.985 19.644v-4.992m0 0h4.992m-4.993 0 3.181 3.183a8.25 8.25 0 0 0 13.803-3.7M4.031 9.865a8.25 8.25 0 0 1 13.803-3.7l3.181 3.182m0-4.991v4.99"/></svg><svg class="abs" style="left:1636px;top:897px" width="12" height="12" viewBox="0 0 12 12" stroke="#3f4a5e" stroke-width="1.5"><path d="M6 .5v11M.5 6h11"/></svg><svg class="abs" style="left:1681px;top:895px" width="15" height="15" viewBox="0 0 24 24" fill="none" stroke="#1d4f91" stroke-width="1.7" stroke-linecap="round" stroke-linejoin="round"><path d="M3 16.5v2.25A2.25 2.25 0 0 0 5.25 21h13.5A2.25 2.25 0 0 0 21 18.75V16.5M16.5 12 12 16.5m0 0L7.5 12m4.5 4.5V3"/></svg><svg class="abs" style="left:1730px;top:896px" width="12" height="14" viewBox="0 0 448 512"><path fill="#d9363e" d="M135.200 17.700C140.600 6.800 151.700 0 163.800 0H284.200c12.100 0 23.200 6.800 28.600 17.700L320 32h96c17.700 0 32 14.300 32 32s-14.300 32-32 32H32C14.300 96 0 81.700 0 64S14.300 32 32 32h96l7.200-14.300zM32 128H416V448c0 35.300-28.700 64-64 64H96c-35.300 0-64-28.700-64-64V128zm96 64c-8.800 0-16 7.200-16 16V432c0 8.800 7.200 16 16 16s16-7.200 16-16V208c0-8.800-7.200-16-16-16zm96 0c-8.800 0-16 7.200-16 16V432c0 8.800 7.200 16 16 16s16-7.200 16-16V208c0-8.800-7.200-16-16-16zm96 0c-8.800 0-16 7.200-16 16V432c0 8.800 7.200 16 16 16s16-7.200 16-16V208c0-8.800-7.200-16-16-16z"/></svg><svg class="abs" style="left:1560px;top:798px" width="72" height="78" viewBox="0 0 72 78" fill="none" stroke="#cf4650" stroke-width="1.15"><ellipse cx="36.2" cy="37.6" rx="29.6" ry="33.6" transform="rotate(-6 36.2 37.6)"/><ellipse cx="35.4" cy="39" rx="28.6" ry="32.4" transform="rotate(7 35.4 39)"/></svg>
</div>
</body></html>
